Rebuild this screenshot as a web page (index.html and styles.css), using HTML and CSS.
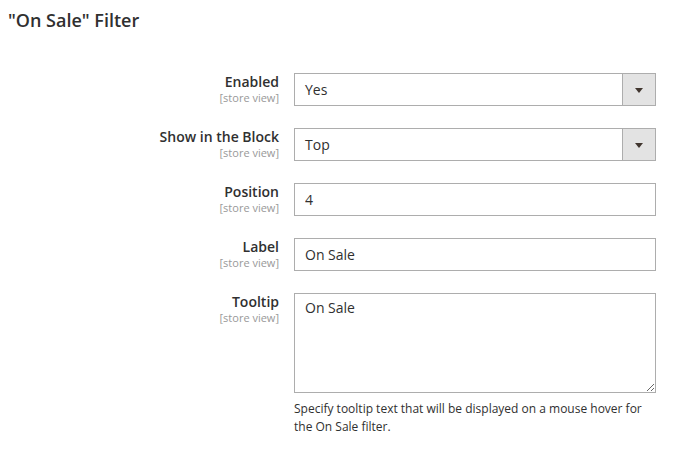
FILE: index.html
```html
<!DOCTYPE html>
<html>
<head>
<meta charset="utf-8">
<link rel="stylesheet" href="styles.css">
</head>
<body>
<div class="page">
  <h2 class="legend">"On Sale" Filter</h2>
  <div class="form">
    <div class="row">
      <div class="label"><span class="name">Enabled</span><span class="scope">[store view]</span></div>
      <div class="control">
        <div class="select"><span class="value">Yes</span><span class="btn"><span class="arrow"></span></span></div>
      </div>
    </div>
    <div class="row">
      <div class="label"><span class="name">Show in the Block</span><span class="scope">[store view]</span></div>
      <div class="control">
        <div class="select"><span class="value">Top</span><span class="btn"><span class="arrow"></span></span></div>
      </div>
    </div>
    <div class="row">
      <div class="label"><span class="name">Position</span><span class="scope">[store view]</span></div>
      <div class="control"><input class="text" type="text" value="4"></div>
    </div>
    <div class="row">
      <div class="label"><span class="name">Label</span><span class="scope">[store view]</span></div>
      <div class="control"><input class="text" type="text" value="On Sale"></div>
    </div>
    <div class="row">
      <div class="label"><span class="name">Tooltip</span><span class="scope">[store view]</span></div>
      <div class="control">
        <textarea class="area">On Sale</textarea>
        <p class="note">Specify tooltip text that will be displayed on a mouse hover for the On Sale filter.</p>
      </div>
    </div>
  </div>
</div>
</body>
</html>
```

FILE: styles.css
```css
html, body {
  margin: 0;
  padding: 0;
  background: #ffffff;
}
body {
  font-family: "Open Sans", "Liberation Sans", sans-serif;
  color: #303030;
}
.page {
  padding: 0;
}
.legend {
  margin: 0;
  padding: 8px 0 0 8px;
  font-size: 18px;
  font-weight: 600;
  line-height: 24px;
  color: #303030;
}
.form {
  display: flex;
  flex-direction: column;
  gap: 22px;
  margin-top: 41px;
}
.row {
  display: grid;
  grid-template-columns: 279px 362px;
  column-gap: 15px;
  align-items: start;
}
.label {
  display: flex;
  flex-direction: column;
  align-items: flex-end;
  text-align: right;
}
.name {
  font-size: 14px;
  font-weight: 600;
  line-height: 18px;
  color: #303030;
}
.scope {
  font-size: 11px;
  line-height: 13px;
  color: #999999;
}
.control {
  display: flex;
  flex-direction: column;
}
.select {
  display: flex;
  height: 33px;
  box-sizing: border-box;
  border: 1px solid #adadad;
  background: #fff;
}
.value {
  flex: 1;
  padding-left: 10px;
  font-size: 14px;
  line-height: 31px;
  color: #303030;
}
.btn {
  width: 32px;
  border-left: 1px solid #adadad;
  background: #e3e3e3;
  display: flex;
  align-items: center;
  justify-content: center;
}
.arrow {
  width: 0;
  height: 0;
  border-left: 4px solid transparent;
  border-right: 4px solid transparent;
  border-top: 5px solid #41362f;
  margin-top: 1px;
}
.text {
  height: 33px;
  box-sizing: border-box;
  border: 1px solid #adadad;
  border-radius: 0;
  padding: 0 10px;
  margin: 0;
  font-family: "Open Sans", "Liberation Sans", sans-serif;
  font-size: 14px;
  color: #303030;
  outline: none;
}
.area {
  display: block;
  height: 100px;
  box-sizing: border-box;
  border: 1px solid #adadad;
  border-radius: 0;
  padding: 5px 10px;
  margin: 0;
  font-family: "Open Sans", "Liberation Sans", sans-serif;
  font-size: 14px;
  line-height: 18px;
  color: #303030;
  resize: vertical;
  outline: none;
}
.note {
  margin: 7px 0 0;
  font-size: 12px;
  line-height: 18px;
  color: #303030;
}
```
